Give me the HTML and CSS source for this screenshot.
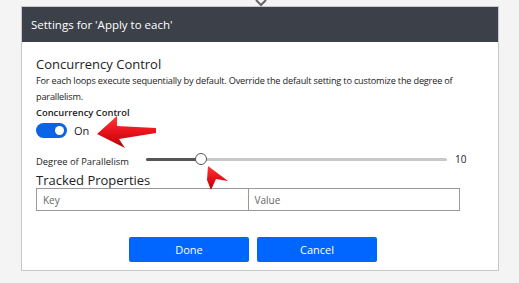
FILE: index.html
```html
<!DOCTYPE html>
<html>
<head>
<meta charset="utf-8">
<link rel="stylesheet" href="styles.css">
</head>
<body>
<div class="page">
  <svg class="connector" width="14" height="7" viewBox="0 0 14 7"><path d="M2 0 L7 5 L12 0" fill="none" stroke="#666" stroke-width="2"/></svg>
  <div class="dialog">
    <div class="header">Settings for 'Apply to each'</div>
    <div class="body">
      <div class="title">Concurrency Control</div>
      <div class="desc">For each loops execute sequentially by default. Override the default setting to customize the degree of parallelism.</div>
      <div class="label">Concurrency Control</div>
      <div class="toggle-row">
        <span class="toggle"><span class="knob"></span></span>
        <span class="on">On</span>
      </div>
      <div class="slider-row">
        <span class="slabel">Degree of Parallelism</span>
        <span class="track"><span class="fill"></span><span class="thumb"></span></span>
        <span class="sval">10</span>
      </div>
      <div class="title2">Tracked Properties</div>
      <div class="table">
        <div class="cell">Key</div>
        <div class="cell">Value</div>
      </div>
      <div class="buttons">
        <button class="btn">Done</button>
        <button class="btn">Cancel</button>
      </div>
    </div>
  </div>
  <svg class="arrows" width="519" height="283" viewBox="0 0 519 283">
    <defs>
      <linearGradient id="rg" x1="0" y1="0" x2="0" y2="1">
        <stop offset="0" stop-color="#ff3a3a"/>
        <stop offset="0.5" stop-color="#e8121a"/>
        <stop offset="1" stop-color="#b50008"/>
      </linearGradient>
    </defs>
    <polygon points="97,134 117,116 117,126 156,128 156,133 119,139 125,148" fill="url(#rg)"/>
    <polygon points="208,166 228,181 216,179 211,190 207,180" fill="url(#rg)"/>
  </svg>
</div>
</body>
</html>
```
FILE: styles.css
```css
html, body {
  margin: 0;
  padding: 0;
  background: #f4f4f4;
  font-family: "Open Sans", "Noto Sans", sans-serif;
}
.page {
  position: relative;
  width: 519px;
  height: 283px;
  overflow: hidden;
  padding-top: 6px;
  box-sizing: border-box;
}
.connector {
  position: absolute;
  left: 254px;
  top: 0;
}
.dialog {
  margin-left: 21px;
  width: 478px;
  height: 265px;
  background: #fff;
  border: 1px solid #c8c8c8;
  box-sizing: border-box;
}
.header {
  height: 35px;
  background: #3c4149;
  color: #fff;
  font-size: 11.5px;
  display: flex;
  align-items: center;
  padding-left: 9px;
}
.body {
  padding: 13px 0 0 14px;
  display: flex;
  flex-direction: column;
  color: #222;
}
.title {
  font-size: 13px;
  line-height: 18px;
}
.desc {
  font-size: 9.2px;
  letter-spacing: -0.2px;
  line-height: 16px;
  width: 460px;
}
.label {
  font-size: 9.4px;
  font-weight: 600;
  line-height: 16px;
}
.toggle-row {
  display: flex;
  align-items: center;
  gap: 7px;
  margin-top: 1px;
  height: 16px;
}
.toggle {
  width: 31px;
  height: 15px;
  border-radius: 8px;
  background: #0a64e6;
  position: relative;
}
.knob {
  position: absolute;
  right: 3px;
  top: 3px;
  width: 9px;
  height: 9px;
  border-radius: 50%;
  background: #fff;
}
.on {
  font-size: 11px;
}
.slider-row {
  display: flex;
  align-items: center;
  margin-top: 14px;
  height: 14px;
}
.slabel {
  font-size: 9.4px;
  width: 110px;
  padding-top: 4px;
}
.track {
  position: relative;
  width: 301px;
  height: 3px;
  background: #c8c8c8;
  border-radius: 2px;
}
.fill {
  position: absolute;
  left: 0;
  top: 0;
  height: 3px;
  width: 55px;
  background: #555;
  border-radius: 2px;
}
.thumb {
  position: absolute;
  left: 49px;
  top: -5px;
  width: 10px;
  height: 10px;
  border-radius: 50%;
  background: #fff;
  border: 1px solid #555;
}
.sval {
  font-size: 10px;
  margin-left: 8px;
}
.title2 {
  font-size: 13px;
  line-height: 16px;
  margin-top: 6px;
}
.table {
  display: flex;
  width: 424px;
  height: 23px;
  border: 1px solid #999;
  box-sizing: border-box;
}
.cell {
  flex: 1;
  font-size: 10px;
  color: #666;
  padding-left: 6px;
  display: flex;
  align-items: center;
}
.cell + .cell {
  border-left: 1px solid #999;
}
.buttons {
  display: flex;
  gap: 8px;
  margin-top: 26px;
  margin-left: 93px;
}
.btn {
  width: 120px;
  height: 25px;
  background: #0066ff;
  color: #fff;
  border: none;
  border-radius: 2px;
  font-family: "Open Sans", "Noto Sans", sans-serif;
  font-size: 11px;
  padding: 0;
}
.arrows {
  position: absolute;
  left: 0;
  top: 0;
  pointer-events: none;
}
```
